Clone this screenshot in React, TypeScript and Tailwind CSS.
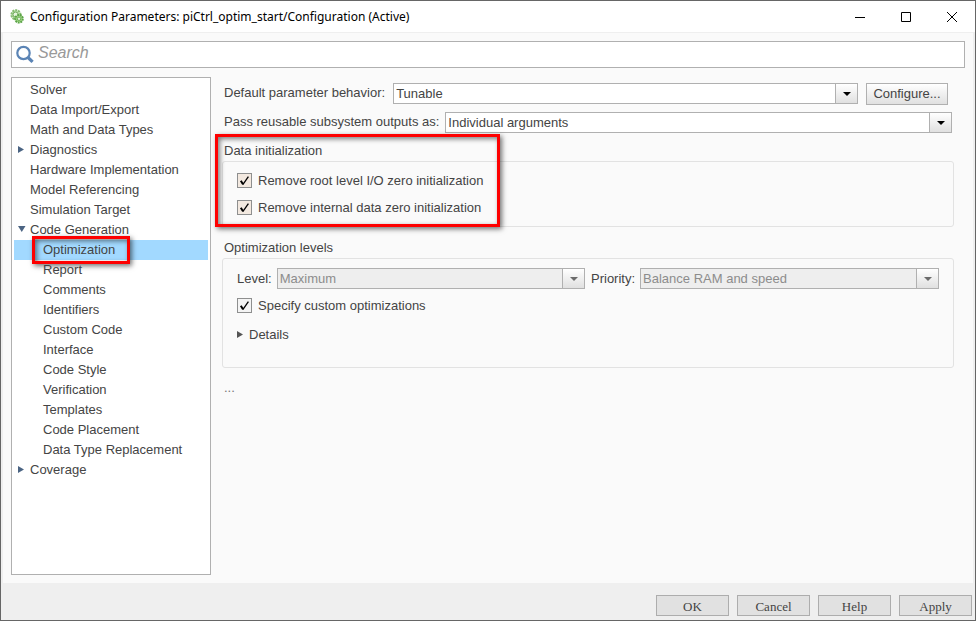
import React from 'react';

interface TreeItem {
  label: string;
  child?: boolean;
  state?: 'open' | 'closed';
  selected?: boolean;
}

const treeItems: TreeItem[] = [
  { label: 'Solver' },
  { label: 'Data Import/Export' },
  { label: 'Math and Data Types' },
  { label: 'Diagnostics', state: 'closed' },
  { label: 'Hardware Implementation' },
  { label: 'Model Referencing' },
  { label: 'Simulation Target' },
  { label: 'Code Generation', state: 'open' },
  { label: 'Optimization', child: true, selected: true },
  { label: 'Report', child: true },
  { label: 'Comments', child: true },
  { label: 'Identifiers', child: true },
  { label: 'Custom Code', child: true },
  { label: 'Interface', child: true },
  { label: 'Code Style', child: true },
  { label: 'Verification', child: true },
  { label: 'Templates', child: true },
  { label: 'Code Placement', child: true },
  { label: 'Data Type Replacement', child: true },
  { label: 'Coverage', state: 'closed' },
];

const GearIcon = () => (
  <svg className="h-4 w-4 shrink-0" viewBox="0 0 16 16" aria-hidden="true">
    <circle cx="7" cy="5.8" r="4.6" fill="#c3e2b3" stroke="#84bb70" strokeWidth="2" strokeDasharray="2 0.9" />
    <circle cx="6.6" cy="5.6" r="2.6" fill="#e6f3de" stroke="#6dab58" strokeWidth="1" />
    <circle cx="10" cy="9.8" r="3.8" fill="#a3d887" stroke="#5ba347" strokeWidth="2" strokeDasharray="1.8 0.8" />
    <circle cx="10" cy="9.8" r="1.7" fill="#e2f3d8" stroke="#5ba347" strokeWidth="0.8" />
  </svg>
);

const SearchIcon = () => (
  <svg className="h-5 w-5 shrink-0" viewBox="0 0 20 20" fill="none" stroke="#5b84b5" aria-hidden="true">
    <circle cx="8.5" cy="8" r="6.2" strokeWidth="2.2" />
    <path d="M13 12.5l4.6 4.4" strokeWidth="3.2" />
  </svg>
);

const Twisty = ({ state, className }: { state: 'open' | 'closed'; className: string }) => (
  <svg className={`h-2 w-2 shrink-0 ${className}`} viewBox="0 0 8 8" fill="currentColor" aria-hidden="true">
    <path d={state === 'open' ? 'M0 0h7.5L3.75 6z' : 'M0 0l6 3.5-6 3.5z'} />
  </svg>
);

interface SelectProps {
  id: string;
  value: string;
  disabled?: boolean;
}

const Select: React.FC<SelectProps> = ({ id, value, disabled }) => (
  <div className="relative min-w-0 flex-1">
    <select
      id={id}
      disabled={disabled}
      className="block h-[21px] w-full appearance-none rounded-none border border-[#b0b0b0] bg-white pr-6 pl-0.5 text-[13px] leading-[19px] text-[#444] disabled:bg-[#eeeeee] disabled:text-[#8c8c8c] disabled:opacity-100"
    >
      <option>{value}</option>
    </select>
    <span className="pointer-events-none absolute inset-y-px right-px flex w-[22px] items-center justify-center border-l border-[#b0b0b0] bg-linear-to-b from-white to-[#e0e0e0]">
      <svg className={`h-1 w-2 ${disabled ? 'text-[#6b6b6b]' : 'text-black'}`} viewBox="0 0 8 4" fill="currentColor" aria-hidden="true">
        <path d="M0 0h8L4 4z" />
      </svg>
    </span>
  </div>
);

const Checkbox = ({ label, tone }: { label: string; tone: string }) => (
  <label className="flex h-[15px] items-center gap-1.5">
    <span className="relative h-[15px] w-[15px] shrink-0">
      <input type="checkbox" defaultChecked className={`peer block h-[15px] w-[15px] appearance-none border border-[#8e8f8f] ${tone}`} />
      <svg className="pointer-events-none absolute inset-0 hidden h-[15px] w-[15px] peer-checked:block" viewBox="0 0 15 15" fill="none" stroke="#000" aria-hidden="true">
        <path d="M3.8 7.8l2.2 3.4" strokeWidth="2" />
        <path d="M5.8 11.6L11.4 3.6" strokeWidth="1.3" />
      </svg>
    </span>
    {label}
  </label>
);

// red frame drawn over the area it points out
const Highlight = ({ className }: { className: string }) => (
  <div
    className={`pointer-events-none absolute border-3 border-[#fe0000] shadow-[2px_2px_5px_rgba(0,0,0,0.55),inset_2px_2px_5px_rgba(0,0,0,0.5)] ${className}`}
  />
);

const TitleBar = () => (
  <header className="flex h-[31px] items-center bg-white pl-2">
    <GearIcon />
    <h1 className="ml-[5px] flex-1 font-['Noto_Sans',sans-serif] text-[12px] text-black">
      Configuration Parameters: piCtrl_optim_start/Configuration (Active)
    </h1>
    <div className="flex h-[29px]">
      <button aria-label="Minimize" className="flex w-[46px] items-center justify-center">
        <svg className="h-2.5 w-2.5" viewBox="0 0 10 10" stroke="#000" fill="none"><path d="M0 5.5h10" /></svg>
      </button>
      <button aria-label="Maximize" className="flex w-[46px] items-center justify-center">
        <svg className="h-2.5 w-2.5" viewBox="0 0 10 10" stroke="#000" fill="none"><path d="M.5.5h9v9h-9z" /></svg>
      </button>
      <button aria-label="Close" className="flex w-[46px] items-center justify-center">
        <svg className="h-2.5 w-2.5" viewBox="0 0 10 10" stroke="#000" fill="none"><path d="M0 0l10 10M10 0L0 10" /></svg>
      </button>
    </div>
  </header>
);

const Tree = () => (
  <nav className="w-[200px] shrink-0 border border-[#b0b0b0] bg-white p-0.5">
    <ul>
      {treeItems.map((item) => (
        <li key={item.label} className={`relative flex h-5 ${item.selected ? 'bg-[#a2d9ff]' : ''}`}>
          <button className={`flex flex-1 items-center ${item.child ? 'pl-[29px]' : item.state ? 'gap-1 pl-1' : 'pl-4'}`}>
            {item.state && <Twisty state={item.state} className="text-[#4b6483]" />}
            {item.label}
          </button>
          {item.selected && <Highlight className="-top-1 left-[18px] h-7 w-[98px]" />}
        </li>
      ))}
    </ul>
  </nav>
);

const Settings = () => (
  <main className="min-w-0 flex-1 pt-1.5 pr-[11px] pl-[11px]">
    <div className="flex items-start gap-2 pr-1.5 pl-0.5">
      <label htmlFor="behavior">Default parameter behavior:</label>
      <Select id="behavior" value="Tunable" />
      <button className="h-[22px] w-[82px] border border-[#b0b0b0] bg-linear-to-b from-white to-[#e0e0e0]">Configure...</button>
    </div>
    <div className="mt-[7px] flex items-start gap-1.5 pr-0.5 pl-0.5">
      <label htmlFor="outputs">Pass reusable subsystem outputs as:</label>
      <Select id="outputs" value="Individual arguments" />
    </div>

    <section className="relative mt-2">
      <h2 className="pl-0.5">Data initialization</h2>
      <div className="flex flex-col gap-3 rounded-[3px] border border-[#e2e2e2] px-3.5 py-[11px]">
        <Checkbox label="Remove root level I/O zero initialization" tone="bg-[#f3e9e0]" />
        <Checkbox label="Remove internal data zero initialization" tone="bg-[#f3e9e0]" />
      </div>
      <Highlight className="-top-[7px] -left-[7px] h-[93px] w-[285px]" />
    </section>

    <section className="mt-[11px]">
      <h2 className="pl-0.5">Optimization levels</h2>
      <div className="h-[110px] rounded-[3px] border border-[#e2e2e2] px-3.5 py-[9px]">
        <div className="flex items-center gap-1.5">
          <div className="flex flex-1 items-center gap-[5px]">
            <label htmlFor="level">Level:</label>
            <Select id="level" value="Maximum" disabled />
          </div>
          <div className="flex flex-1 items-center gap-[5px]">
            <label htmlFor="priority">Priority:</label>
            <Select id="priority" value="Balance RAM and speed" disabled />
          </div>
        </div>
        <div className="mt-[9px]">
          <Checkbox label="Specify custom optimizations" tone="bg-[#f4f4f4]" />
        </div>
        <button className="mt-3 flex items-center gap-1">
          <Twisty state="closed" className="text-[#555]" />
          Details
        </button>
      </div>
    </section>

    <p className="mt-2.5 pl-0.5 text-[#777]">...</p>
  </main>
);

const dialogButtons = ['OK', 'Cancel', 'Help', 'Apply'];

export default function App() {
  return (
    <div className="flex min-h-screen flex-col border border-[#666] bg-[#efefef] font-['Liberation_Sans',Arial,sans-serif] text-[13px] leading-5 text-[#444]">
      <TitleBar />
      <div className="mx-0.5 mt-px flex flex-1 flex-col bg-[#fafafa] px-2 py-2">
        <label className="flex h-[27px] items-center border border-[#b0b0b0] bg-white pl-[3px]">
          <SearchIcon />
          <input
            type="text"
            aria-label="Search"
            placeholder="Search"
            className="ml-[3px] min-w-0 flex-1 pb-1 text-base leading-5 italic outline-none placeholder:text-[#999]"
          />
        </label>
        <div className="mt-[9px] flex flex-1">
          <Tree />
          <Settings />
        </div>
      </div>
      <footer className="flex h-[37px] items-end justify-end gap-2 pr-[3px] pb-1">
        {dialogButtons.map((text) => (
          <button
            key={text}
            className="h-[21px] w-[73px] border border-[#adadad] bg-[#e1e1e1] pt-0.5 font-['Liberation_Serif',serif] text-[13px] leading-4"
          >
            {text}
          </button>
        ))}
      </footer>
    </div>
  );
}
